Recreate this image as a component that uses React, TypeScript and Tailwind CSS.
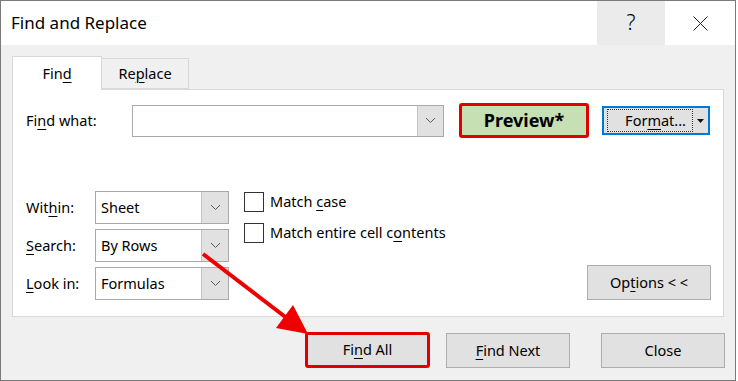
import React from "react";

const U = ({ children }: { children: React.ReactNode }) => (
  <span className="underline underline-offset-[3px] decoration-1">{children}</span>
);

const Chevron = () => (
  <svg width="11" height="7" viewBox="0 0 11 7">
    <path d="M1 1l4.5 4.5L10 1" fill="none" stroke="#5a5a5a" strokeWidth="1" />
  </svg>
);

const Select = ({ text }: { text: string }) => (
  <div className="flex h-[33px] w-[134px] border border-[#a9a9a9] bg-white">
    <div className="flex flex-1 items-center pl-[5px]">{text}</div>
    <div className="flex w-[27px] items-center justify-center border-l border-[#c4c4c4] bg-[#e1e1e1]">
      <Chevron />
    </div>
  </div>
);

const Btn = ({ children, cls }: { children: React.ReactNode; cls: string }) => (
  <div className={`flex items-center justify-center border border-[#adadad] bg-[#e1e1e1] ${cls}`}>{children}</div>
);

export default function App() {
  return (
    <div className="relative h-[381px] w-[738px] bg-white font-['Noto_Sans','Open_Sans',sans-serif] text-[14.5px] text-black">
      <div className="flex h-[381px] w-[736px] flex-col border border-[#7a7a7a]">
        {/* title bar */}
        <div className="flex h-[44px] items-center bg-white">
          <div className="pl-[10px] text-[17px]">Find and Replace</div>
          <div className="ml-auto flex h-full">
            <div className="flex h-full w-[68px] items-center justify-center bg-[#ebebeb] text-[21px] font-light">?</div>
            <div className="flex h-full w-[70px] items-center justify-center">
              <svg width="15" height="15" viewBox="0 0 15 15">
                <path d="M0.5 0.5L14.5 14.5M14.5 0.5L0.5 14.5" stroke="#222" strokeWidth="1" />
              </svg>
            </div>
          </div>
        </div>
        {/* body */}
        <div className="flex flex-1 flex-col bg-[#f0f0f0] pl-[11px]">
          <div className="flex h-[44px] items-end pt-[11px]">
            <div className="relative z-10 -mb-px flex h-[34px] w-[90px] items-center justify-center border border-b-0 border-[#d9d9d9] bg-white">
              Fin<U>d</U>
            </div>
            <div className="flex h-[31px] w-[87px] items-center justify-center border border-l-0 border-[#d9d9d9] bg-[#f0f0f0]">
              Re<U>p</U>lace
            </div>
          </div>
          <div className="flex h-[228px] w-[712px] flex-col border border-[#d9d9d9] bg-white pl-[13px] pr-[12px] pt-[13px]">
            <div className="flex items-center">
              <div className="w-[106px]">
                Fi<U>n</U>d what:
              </div>
              <div className="flex h-[32px] w-[312px] border border-[#a9a9a9] bg-white">
                <div className="flex-1" />
                <div className="flex w-[26px] items-center justify-center border-l border-[#c4c4c4] bg-[#e1e1e1]">
                  <Chevron />
                </div>
              </div>
              <div className="ml-[15px] flex h-[35px] w-[130px] items-center justify-center rounded-[3px] border-[3px] border-[#e00000] bg-[#c6e0b4] text-[18px] font-bold">
                Preview*
              </div>
              <div className="ml-[13px] flex h-[29px] w-[108px] items-center border-2 border-[#0078d7] bg-[#e1e1e1] pl-[3px]">
                <div className="flex h-[23px] w-[86px] items-center justify-end border border-dotted border-[#333] pr-[6px]">
                  For<U>m</U>at...
                </div>
                <div className="flex flex-1 items-center justify-center">
                  <svg width="7" height="4" viewBox="0 0 7 4">
                    <path d="M0 0h7L3.5 4z" fill="#111" />
                  </svg>
                </div>
              </div>
            </div>
            <div className="mt-[53px] flex items-end">
              <div className="flex flex-col gap-[5px]">
                <div className="flex items-center">
                  <div className="w-[69px]">
                    Wit<U>h</U>in:
                  </div>
                  <Select text="Sheet" />
                </div>
                <div className="flex items-center">
                  <div className="w-[69px]">
                    <U>S</U>earch:
                  </div>
                  <Select text="By Rows" />
                </div>
                <div className="flex items-center">
                  <div className="w-[69px]">
                    <U>L</U>ook in:
                  </div>
                  <Select text="Formulas" />
                </div>
              </div>
              <div className="ml-[15px] flex flex-col gap-[11px] self-start pt-[1px]">
                <div className="flex h-[20px] items-center gap-[6px]">
                  <div className="h-[20px] w-[20px] border border-[#333] bg-white" />
                  <div>
                    Match <U>c</U>ase
                  </div>
                </div>
                <div className="flex h-[20px] items-center gap-[6px]">
                  <div className="h-[20px] w-[20px] border border-[#333] bg-white" />
                  <div>
                    Match entire cell c<U>o</U>ntents
                  </div>
                </div>
              </div>
              <Btn cls="ml-auto h-[35px] w-[124px]">
                Op<U>t</U>ions &lt; &lt;
              </Btn>
            </div>
          </div>
          <div className="mt-[15px] flex items-end justify-end pr-[10px]">
            <div className="flex h-[36px] w-[125px] items-center justify-center rounded-[3px] border-[3px] border-[#e00000] bg-[#e1e1e1]">
              Fi<U>n</U>d All
            </div>
            <Btn cls="ml-[16px] h-[35px] w-[124px]">
              <U>F</U>ind Next
            </Btn>
            <Btn cls="ml-[31px] h-[35px] w-[124px]">Close</Btn>
          </div>
        </div>
      </div>
      <svg className="pointer-events-none absolute left-0 top-0" width="738" height="381">
        <line x1="203" y1="254" x2="288" y2="319" stroke="#ee0000" strokeWidth="4" />
        <polygon points="308,334 276,328 293,305" fill="#ee0000" />
      </svg>
    </div>
  );
}
